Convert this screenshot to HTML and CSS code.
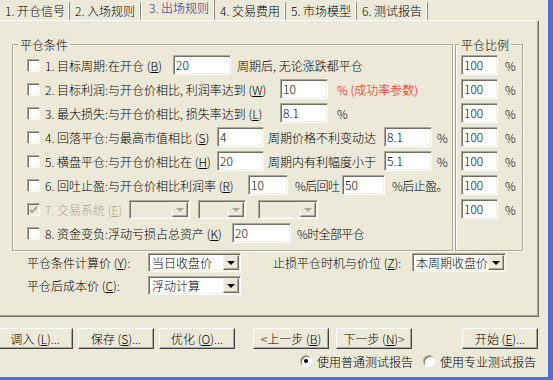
FILE: index.html
```html
<!DOCTYPE html>
<html lang="zh-CN">
<head>
  <meta charset="UTF-8">
  <title>出场规则</title>
  <link rel="stylesheet" href="styles.css">
</head>
<body>
  <div class="window">
    <!-- tab strip -->
    <div class="tabs">
      <div class="tab">1. 开仓信号</div>
      <div class="tab">2. 入场规则</div>
      <div class="tab active">3. 出场规则</div>
      <div class="tab">4. 交易费用</div>
      <div class="tab">5. 市场模型</div>
      <div class="tab">6. 测试报告</div>
    </div>

    <div class="panel">
      <div class="groups">
        <!-- exit conditions -->
        <div class="group cond">
          <div class="group-title">平仓条件</div>
          <div class="row">
            <span class="chk"></span>
            <span class="lbl l128">1. 目标周期:在开仓 (<u>B</u>)</span>
            <span class="edit w58">20</span>
            <span class="ml6">周期后, 无论涨跌都平仓</span>
          </div>
          <div class="row">
            <span class="chk"></span>
            <span class="lbl l235">2. 目标利润:与开仓价相比, 利润率达到 (<u>W</u>)</span>
            <span class="edit w48">10</span>
            <span class="ml9 red">% (成功率参数)</span>
          </div>
          <div class="row">
            <span class="chk"></span>
            <span class="lbl l235">3. 最大损失:与开仓价相比, 损失率达到 (<u>L</u>)</span>
            <span class="edit w48">8.1</span>
            <span class="ml9">%</span>
          </div>
          <div class="row">
            <span class="chk"></span>
            <span class="lbl l172">4. 回落平仓:与最高市值相比 (<u>S</u>)</span>
            <span class="edit w47">4</span>
            <span class="lbl ml4 l116">周期价格不利变动达</span>
            <span class="edit w48">8.1</span>
            <span class="ml5">%</span>
          </div>
          <div class="row">
            <span class="chk"></span>
            <span class="lbl l172">5. 横盘平仓:与开仓价相比在 (<u>H</u>)</span>
            <span class="edit w47">20</span>
            <span class="lbl ml4 l116">周期内有利幅度小于</span>
            <span class="edit w48">5.1</span>
            <span class="ml5">%</span>
          </div>
          <div class="row">
            <span class="chk"></span>
            <span class="lbl l203">6. 回吐止盈:与开仓价相比利润率 (<u>R</u>)</span>
            <span class="edit w40">10</span>
            <span class="lbl ml7 l47 tight">%后回吐</span>
            <span class="edit w43">50</span>
            <span class="ml7 tight">%后止盈。</span>
          </div>
          <div class="row">
            <span class="chk checked disabled">
              <svg width="11" height="11" viewBox="0 0 11 11"><path d="M2 5 L4 7 L9 2 M2 6 L4 8 L9 3 M2 7 L4 9 L9 4" fill="none" stroke="#ACA899" stroke-width="1"/></svg>
            </span>
            <span class="lbl l84 dim">7. 交易系统 (<u>E</u>)</span>
            <span class="combo disabled w61"><span class="val"></span><span class="drop"><i></i></span></span>
            <span class="combo disabled ml8 w48"><span class="val"></span><span class="drop"><i></i></span></span>
            <span class="combo disabled ml12 w60"><span class="val"></span><span class="drop"><i></i></span></span>
          </div>
          <div class="row">
            <span class="chk"></span>
            <span class="lbl l187">8. 资金变负:浮动亏损占总资产 (<u>K</u>)</span>
            <span class="edit w59">20</span>
            <span class="ml6 tight">%时全部平仓</span>
          </div>
        </div>

        <!-- exit ratio -->
        <div class="group ratio">
          <div class="group-title">平仓比例</div>
          <div class="row"><span class="edit w37">100</span><span class="ml7">%</span></div>
          <div class="row"><span class="edit w37">100</span><span class="ml7">%</span></div>
          <div class="row"><span class="edit w37">100</span><span class="ml7">%</span></div>
          <div class="row"><span class="edit w37">100</span><span class="ml7">%</span></div>
          <div class="row"><span class="edit w37">100</span><span class="ml7">%</span></div>
          <div class="row"><span class="edit w37">100</span><span class="ml7">%</span></div>
          <div class="row"><span class="edit w37">100</span><span class="ml7">%</span></div>
        </div>
      </div>

      <div class="calc-row">
        <span class="lbl l121">平仓条件计算价 (<u>Y</u>):</span>
        <span class="combo w93"><span class="val">当日收盘价</span><span class="drop"><i></i></span></span>
        <span class="lbl ml32 l139">止损平仓时机与价位 (<u>Z</u>):</span>
        <span class="combo w94"><span class="val">本周期收盘价</span><span class="drop"><i></i></span></span>
      </div>
      <div class="calc-row">
        <span class="lbl l121">平仓后成本价 (<u>C</u>):</span>
        <span class="combo w93"><span class="val">浮动计算</span><span class="drop"><i></i></span></span>
      </div>
    </div>

    <!-- dialog buttons -->
    <div class="buttons">
      <span class="btn first">调入 (<u>L</u>)...</span>
      <span class="btn ml5">保存 (<u>S</u>)...</span>
      <span class="btn ml5">优化 (<u>O</u>)...</span>
      <span class="btn ml18">&lt;上一步 (<u>B</u>)</span>
      <span class="btn ml7">下一步 (<u>N</u>)&gt;</span>
      <span class="btn ml50">开始 (<u>E</u>)...</span>
    </div>

    <div class="radios">
      <span class="radio on"></span>
      <span class="ml5">使用普通测试报告</span>
      <span class="radio ml10"></span>
      <span class="ml5">使用专业测试报告</span>
    </div>
  </div>
</body>
</html>
```

FILE: styles.css
```css
/* Base */
* {
  box-sizing: border-box;
}

body {
  margin: 0;
  background: #ECE9D8;
  color: #000;
  font-family: "Noto Sans CJK SC", "Liberation Sans", sans-serif;
  font-size: 12px;
  font-weight: 300;
  overflow: hidden;
}

u {
  text-decoration: underline;
  text-underline-offset: 1px;
}

/* Window frame, blue edge on right and bottom */
.window {
  width: 553px;
  height: 380px;
  border-right: 5px solid #4A72DA;
  border-bottom: 3px solid #4A72DA;
  display: flex;
  flex-direction: column;
  white-space: nowrap;
}

/* Tabs */
.tabs {
  display: flex;
  height: 20px;
  align-items: flex-end;
}

.tab {
  width: 71px;
  height: 18px;
  line-height: 17px;
  padding-left: 5px;
  border-right: 1px solid #8C8A7E;
  box-shadow: inset -2px 0 0 -1px #fff;
}

.tab:first-child {
  width: 70px;
}

.tab.active {
  width: 74px;
  height: 20px;
  line-height: 16px;
  padding-left: 7px;
  color: #1F1F8F;
  border-left: 1px solid #fff;
}

/* Tab page */
.panel {
  width: 539px;
  height: 297px;
  border-top: 1px solid #fff;
  border-right: 1px solid #716F64;
  border-bottom: 1px solid #716F64;
  box-shadow: inset -1px -1px 0 #ACA899;
}

.groups {
  display: flex;
  gap: 2px;
  margin: 23px 0 0 12px;
}

/* Etched group box */
.group {
  display: flex;
  flex-direction: column;
  height: 207px;
  border: 1px solid #ACA899;
  box-shadow: inset 1px 1px 0 #fff, 1px 1px 0 #fff;
}

.group-title {
  align-self: flex-start;
  margin: -8px 0 0 5px;
  padding: 0 2px;
  line-height: 16px;
  background: #ECE9D8;
}

.cond {
  width: 441px;
  padding-left: 14px;
}

.cond .group-title {
  margin-left: -9px;
}

.ratio {
  width: 68px;
  padding-left: 5px;
}

.ratio .group-title {
  margin-left: -2px;
}

.row {
  display: flex;
  align-items: center;
  height: 24px;
}

.lbl {
  display: inline-block;
}

.tight {
  letter-spacing: -0.6px;
}

.red {
  color: #F00;
}

.dim {
  color: #ACA899;
}

/* Checkbox */
.chk {
  width: 13px;
  height: 13px;
  margin-right: 5px;
  background: #fff;
  border: 1px solid;
  border-color: #ACA899 #fff #fff #ACA899;
  box-shadow: inset 1px 1px 0 #716F64, inset -1px -1px 0 #F1EFE2;
  display: flex;
  align-items: center;
  justify-content: center;
}

.chk.disabled {
  background: #ECE9D8;
}

.chk svg {
  display: block;
}

/* Edit boxes */
.edit {
  height: 20px;
  line-height: 18px;
  padding-left: 2px;
  background: #fff;
  border: 1px solid;
  border-color: #ACA899 #fff #fff #ACA899;
  box-shadow: inset 1px 1px 0 #716F64, inset -1px -1px 0 #F1EFE2;
}

/* Combo boxes */
.combo {
  display: flex;
  height: 19px;
  background: #fff;
  border: 1px solid;
  border-color: #ACA899 #fff #fff #ACA899;
  box-shadow: inset 1px 1px 0 #716F64, inset -1px -1px 0 #F1EFE2;
  padding: 1px;
}

.combo.disabled {
  background: #ECE9D8;
}

.combo .val {
  flex: 1;
  min-width: 0;
  overflow: hidden;
  line-height: 15px;
  padding-left: 2px;
}

.combo .drop {
  flex: none;
  width: 16px;
  height: 15px;
  background: #ECE9D8;
  border: 1px solid;
  border-color: #F1EFE2 #716F64 #716F64 #F1EFE2;
  box-shadow: inset -1px -1px 0 #ACA899;
  display: flex;
  align-items: center;
  justify-content: center;
}

.combo .drop i {
  width: 0;
  height: 0;
  border-left: 4px solid transparent;
  border-right: 4px solid transparent;
  border-top: 4px solid #000;
  margin-top: 1px;
}

.combo.disabled .drop i {
  border-top-color: #ACA899;
}

/* Bottom controls in the page */
.calc-row {
  display: flex;
  align-items: center;
  height: 23px;
  padding-left: 27px;
}

.calc-row:first-of-type {
  margin-top: 6px;
}

/* Dialog buttons */
.buttons {
  display: flex;
  margin-top: 11px;
  height: 21px;
}

.btn {
  width: 76px;
  height: 21px;
  border: 1px solid;
  border-color: #fff #404040 #404040 #fff;
  box-shadow: inset -1px -1px 0 #ACA899;
  display: flex;
  align-items: center;
  justify-content: center;
}

.btn.first {
  margin-left: -3px;
}

/* Radio buttons */
.radios {
  display: flex;
  align-items: center;
  height: 18px;
  margin-top: 3px;
  padding-left: 300px;
}

.radio {
  width: 12px;
  height: 12px;
  border-radius: 50%;
  background: #fff;
  border: 1px solid;
  border-color: #ACA899 #fff #fff #ACA899;
  box-shadow: inset 1px 1px 0 #716F64;
  display: flex;
  align-items: center;
  justify-content: center;
}

.radio.on::after {
  content: "";
  width: 4px;
  height: 4px;
  border-radius: 50%;
  background: #000;
}

/* Widths */
.w37 { width: 37px; }
.w40 { width: 40px; }
.w43 { width: 43px; }
.w47 { width: 47px; }
.w48 { width: 48px; }
.w58 { width: 58px; }
.w59 { width: 59px; }
.w60 { width: 60px; }
.w61 { width: 61px; }
.w93 { width: 93px; }
.w94 { width: 94px; }

.l47 { width: 47px; }
.l84 { width: 84px; }
.l116 { width: 116px; }
.l121 { width: 121px; }
.l128 { width: 128px; }
.l139 { width: 139px; }
.l172 { width: 172px; }
.l187 { width: 187px; }
.l203 { width: 203px; }
.l235 { width: 235px; }

/* Spacing */
.ml4 { margin-left: 4px; }
.ml5 { margin-left: 5px; }
.ml6 { margin-left: 6px; }
.ml7 { margin-left: 7px; }
.ml8 { margin-left: 8px; }
.ml9 { margin-left: 9px; }
.ml10 { margin-left: 10px; }
.ml12 { margin-left: 12px; }
.ml18 { margin-left: 18px; }
.ml32 { margin-left: 32px; }
.ml50 { margin-left: 50px; }
```
